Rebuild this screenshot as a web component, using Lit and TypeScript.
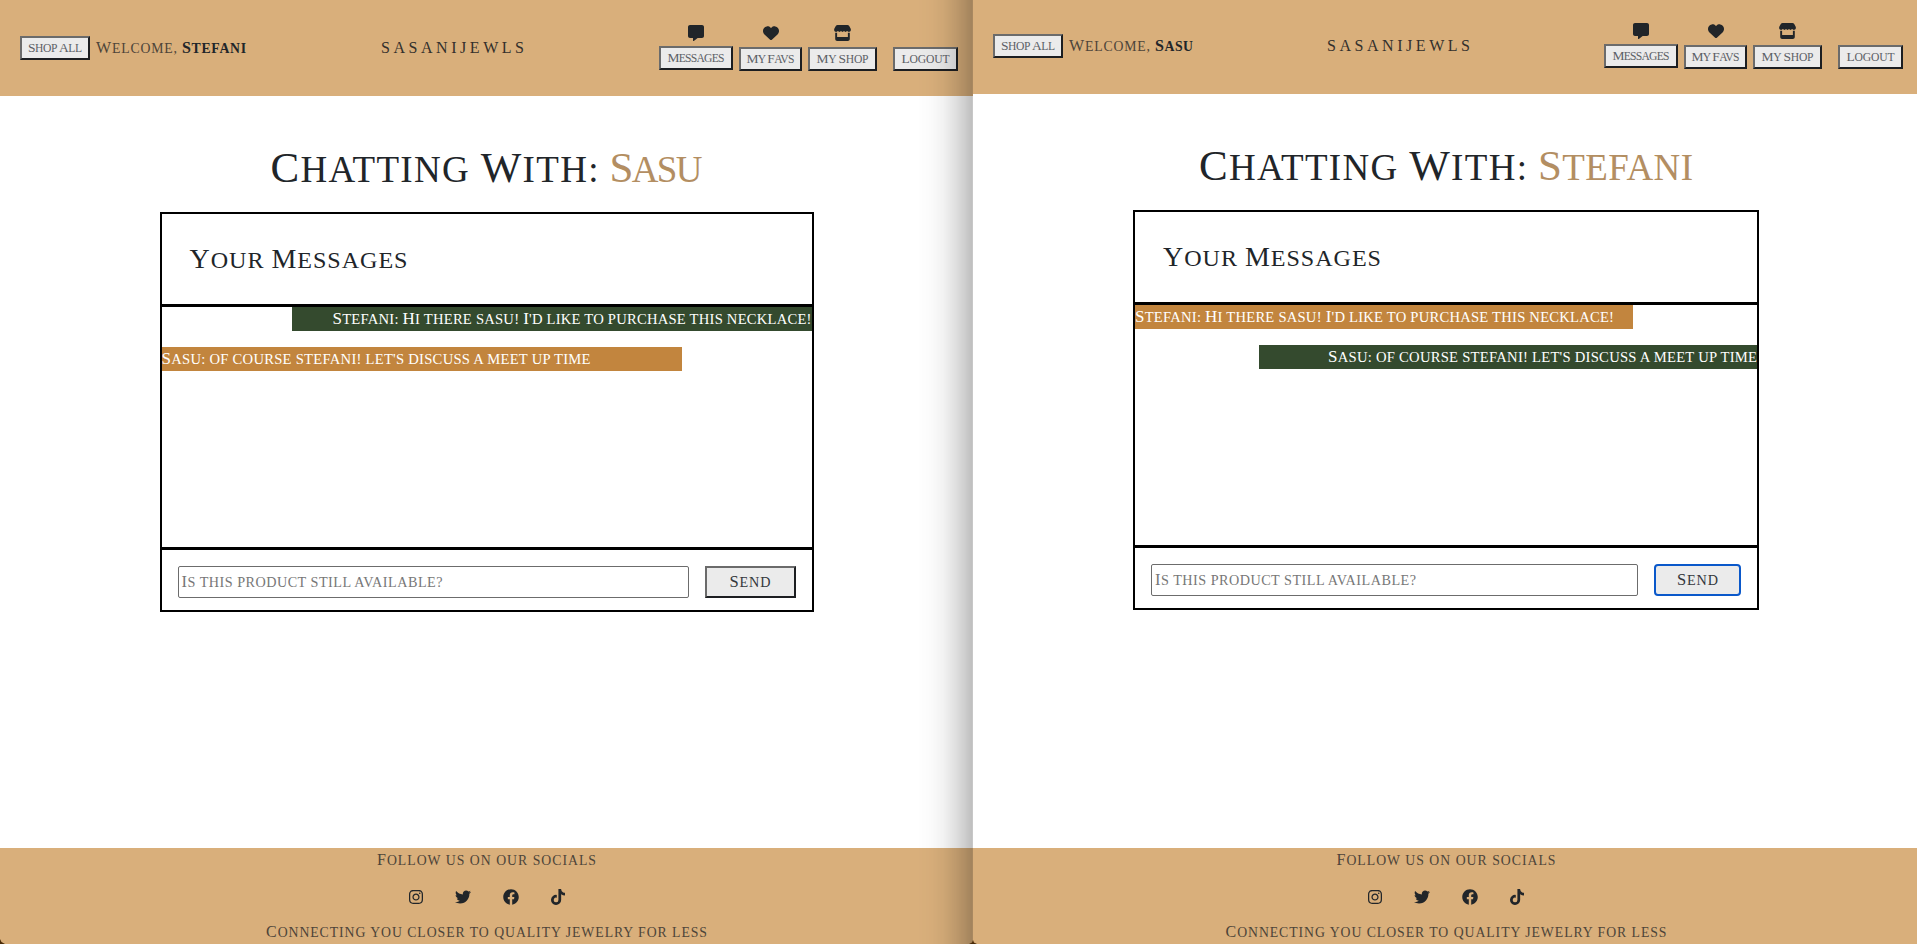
import { LitElement, html, css, svg } from "lit";
import { customElement, property } from "lit/decorators.js";

/* Small-caps run whose tracking is spread so that the line takes a set measure. */
@customElement("cap-text")
class CapText extends LitElement {
  @property() text = "";
  @property({ type: Number }) measure = 0;

  static styles = css`
    :host { display: inline-block; white-space: pre; text-align: left; }
    .run { display: inline-block; text-transform: uppercase; }
    .low { font-size: 0.86em; }
  `;

  updated() {
    const run = this.renderRoot.querySelector(".run") as HTMLElement;
    run.style.letterSpacing = "0px";
    const natural = run.getBoundingClientRect().width;
    run.style.letterSpacing = `${(this.measure - natural) / Math.max(1, this.text.length - 1)}px`;
    this.style.width = `${this.measure}px`;
  }

  render() {
    const parts = this.text.match(/[A-Z]+|[^A-Z]+/g) ?? [];
    return html`<span class="run">${parts.map((p) =>
      /[A-Z]/.test(p) ? p : html`<span class="low">${p}</span>`)}</span>`;
  }
}

const ICONS: Record<string, { box: string; w: number; body: unknown }> = {
  message: { box: "0 0 512 512", w: 16, body: svg`<path d="M64 0C28.7 0 0 28.7 0 64V352c0 35.3 28.7 64 64 64h96v80c0 6.1 3.4 11.6 8.8 14.3s11.9 2.1 16.8-1.5L309.3 416H448c35.3 0 64-28.7 64-64V64c0-35.3-28.7-64-64-64H64z"/>` },
  heart: { box: "0 0 512 512", w: 16, body: svg`<path d="M47.6 300.4L228.3 469.1c7.5 7 17.4 10.9 27.7 10.9s20.2-3.9 27.7-10.9L464.4 300.4c30.4-28.3 47.6-68 47.6-109.5v-5.8c0-69.9-50.5-129.5-119.4-141C347 36.5 300.6 51.4 268 84L256 96 244 84c-32.6-32.6-79-47.5-124.6-39.9C50.5 55.6 0 115.2 0 185.1v5.8c0 41.5 17.2 81.2 47.6 109.5z"/>` },
  shop: { box: "0 0 17 16", w: 17, body: svg`<path d="M3.600 0h9.800c.8 0 1.400.3 1.800 1L16.600 3.500c.4.8.4 1.600.1 2.300-.3.7-1 1.100-1.800 1.100-.8 0-1.400-.3-1.800-.8-.4.500-1 .8-1.600.8-.6 0-1.100-.3-1.500-.8-.4.500-.9.8-1.500.8s-1.100-.3-1.500-.8c-.4.500-.9.8-1.500.8-.6 0-1.200-.3-1.600-.8-.4.500-1 .8-1.800.8S.600 6.500.300 5.800C0 5.100 0 4.300.400 3.500L1.800 1C2.200.3 2.800 0 3.600 0zM1.200 7.700h1.900V12h10.800V7.700h1.900V14c0 1.100-.9 2-2 2H3.200c-1.100 0-2-.9-2-2z"/>` },
  instagram: { box: "0 0 448 512", w: 14, body: svg`<path d="M224.1 141c-63.6 0-114.9 51.3-114.9 114.9s51.300 114.900 114.900 114.900S339 319.500 339 255.900 287.700 141 224.100 141zm0 189.600c-41.100 0-74.700-33.500-74.700-74.700s33.500-74.700 74.700-74.700 74.700 33.500 74.700 74.700-33.600 74.700-74.700 74.700zm146.400-194.300c0 14.900-12 26.800-26.800 26.800-14.900 0-26.800-12-26.800-26.800s12-26.800 26.800-26.800 26.800 12 26.800 26.800zm76.100 27.200c-1.700-35.900-9.900-67.700-36.200-93.900-26.200-26.200-58-34.400-93.900-36.200-37-2.100-147.900-2.100-184.900 0-35.800 1.700-67.600 9.900-93.900 36.100s-34.400 58-36.200 93.900c-2.100 37-2.100 147.900 0 184.900 1.700 35.900 9.900 67.700 36.200 93.900s58 34.400 93.900 36.200c37 2.100 147.900 2.100 184.900 0 35.900-1.700 67.700-9.900 93.900-36.200 26.200-26.200 34.400-58 36.200-93.900 2.100-37 2.100-147.800 0-184.800zM398.800 388c-7.800 19.600-22.900 34.700-42.600 42.600-29.500 11.700-99.500 9-132.100 9s-102.700 2.600-132.100-9c-19.600-7.800-34.700-22.900-42.600-42.600-11.700-29.500-9-99.500-9-132.100s-2.600-102.700 9-132.100c7.800-19.600 22.900-34.700 42.600-42.600 29.500-11.700 99.500-9 132.100-9s102.700-2.600 132.100 9c19.600 7.800 34.700 22.900 42.600 42.600 11.700 29.500 9 99.500 9 132.100s2.700 102.700-9 132.100z"/>` },
  twitter: { box: "0 0 512 512", w: 16, body: svg`<path d="M459.37 151.716c.325 4.548.325 9.097.325 13.645 0 138.72-105.583 298.558-298.558 298.558-59.452 0-114.680-17.219-161.137-47.106 8.447.974 16.568 1.299 25.340 1.299 49.055 0 94.213-16.568 130.274-44.832-46.132-.975-84.792-31.188-98.112-72.772 6.498.974 12.995 1.624 19.818 1.624 9.421 0 18.843-1.300 27.614-3.573-48.081-9.747-84.143-51.980-84.143-102.985v-1.299c13.969 7.797 30.214 12.670 47.431 13.319-28.264-18.843-46.781-51.005-46.781-87.391 0-19.492 5.197-37.360 14.294-52.954 51.655 63.675 129.300 105.258 216.365 109.807-1.624-7.797-2.599-15.918-2.599-24.040 0-57.828 46.782-104.934 104.934-104.934 30.213 0 57.502 12.670 76.670 33.137 23.715-4.548 46.456-13.320 66.599-25.340-7.798 24.366-24.366 44.833-46.132 57.827 21.117-2.273 41.584-8.122 60.426-16.243-14.292 20.791-32.161 39.308-52.628 54.253z"/>` },
  facebook: { box: "0 0 512 512", w: 16, body: svg`<path d="M504 256C504 119 393 8 256 8S8 119 8 256c0 123.780 90.690 226.380 209.250 245V327.690h-63V256h63v-54.640c0-62.150 37-96.480 93.670-96.480 27.140 0 55.520 4.840 55.520 4.840v61h-31.280c-30.800 0-40.410 19.120-40.410 38.730V256h68.780l-11 71.690h-57.780V501C413.310 482.380 504 379.780 504 256z"/>` },
  tiktok: { box: "0 0 448 512", w: 14, body: svg`<path d="M448 209.910a210.060 210.060 0 0 1-122.770-39.250V349.380A162.550 162.550 0 1 1 185 188.310V278.200a74.620 74.620 0 1 0 52.230 71.180V0h88a121.180 121.180 0 0 0 1.860 22.170A122.180 122.180 0 0 0 381 102.390a121.430 121.430 0 0 0 67 20.140z"/>` },
};

const icon = (name: string) => {
  const i = ICONS[name];
  return html`<svg width=${i.w} height="16" viewBox=${i.box} fill="#212529">${i.body}</svg>`;
};

interface Message { text: string; own: boolean; measure: number }

@customElement("chat-pane")
class ChatPane extends LitElement {
  @property() user = "";
  @property() peer = "";
  @property({ type: Array }) m: number[] = [];
  @property({ type: Array }) messages: Message[] = [];
  @property({ type: Boolean, reflect: true }) front = false;

  static styles = css`
    :host {
      display: flex; flex-direction: column; box-sizing: border-box; height: 944px;
      background: #fff; color: #212529; overflow: hidden;
      font-family: "Liberation Serif", serif; --dy: 0px;
    }
    :host([front]) { --dy: 2px; }
    svg { display: block; }
    .header {
      display: flex; justify-content: space-between; height: calc(96px - var(--dy));
      flex: none; background: #d9af7b; padding: 0 15px 0 20px; box-sizing: border-box;
    }
    :host([front]) .header { padding-right: 14px; }
    .left { display: flex; padding-top: calc(36px - var(--dy)); height: 24px; }
    .btn {
      box-sizing: border-box; height: 24px; border: 2px solid; flex: none;
      border-color: #6b6b6b #1c1e21 #1c1e21 #6b6b6b; background: #ebebeb;
      display: flex; justify-content: center; font-size: 13.500px; line-height: 20px; color: #5c6066;
    }
    .welcome { font-size: 16px; line-height: 24px; margin-left: 6px; color: #4d4439; }
    .name { font-size: 16px; line-height: 24px; font-weight: bold; margin-left: 5px; }
    .brand { font-size: 16px; line-height: 24px; padding-top: calc(36px - var(--dy)); color: #33302c; }
    .nav { display: flex; gap: 6px; padding-top: calc(25px - var(--dy)); }
    .item { display: flex; flex-direction: column; align-items: center; gap: 6px; }
    .item.first { gap: 5px; }
    .item.out { padding-top: 22px; margin-left: 10px; }
    .main { flex: 1; display: flex; flex-direction: column; align-items: center; }
    :host([front]) .main, :host([front]) .footer { padding-left: 2px; }
    .title {
      height: 116px; display: flex; justify-content: center; gap: 11px;
      font-size: 43px; line-height: 48px; padding-top: 48px; box-sizing: border-box; margin: 0; font-weight: 400;
    }
    .peer { color: #b38e62; }
    .card { width: 654px; height: 400px; box-sizing: border-box; border: 2px solid #000; display: flex; flex-direction: column; }
    :host([front]) .card { width: 626px; }
    .cardhead { height: 90px; flex: none; padding: 29px 0 0 28px; box-sizing: border-box; font-size: 28px; line-height: 32px; }
    .list { height: 240px; flex: none; border-top: 3px solid #000; display: flex; flex-direction: column; gap: 16px; }
    .bubble { width: 80%; height: 24px; flex: none; background: #c2853e; color: #fff; font-size: 17px; line-height: 24px; white-space: nowrap; }
    .bubble.own { background: #344a2e; align-self: flex-end; text-align: right; }
    .form { border-top: 3px solid #000; display: flex; gap: 16px; padding: 16px 16px 12px; height: 32px; }
    .input {
      flex: 1; box-sizing: border-box; border: 1px solid #6c6c6c; border-radius: 2px;
      padding-left: 3px; font-size: 16.500px; line-height: 30px; color: #777;
    }
    .send {
      width: 91px; height: 32px; box-sizing: border-box; border: 2px solid;
      border-color: #6b6b6b #1c1e21 #1c1e21 #6b6b6b; background: #ebebeb;
      display: flex; justify-content: center; font-size: 16.500px; line-height: 28px; color: #33373b;
    }
    :host([front]) .send { width: 87px; border-color: #0a58ca; border-radius: 4px; }
    .footer {
      flex: none; height: 96px; background: #d9af7b; display: flex; flex-direction: column; align-items: center;
      font-size: 16px; line-height: 24px; color: #4d4439; box-sizing: border-box;
    }
    .socials { display: flex; gap: 32px; padding: 16px 0 15px; }
  `;

  render() {
    const m = this.m;
    const t = (text: string, i: number) => html`<cap-text .text=${text} .measure=${m[i]}></cap-text>`;
    const b = (text: string, i: number, w: number) =>
      html`<div class="btn" style="width:${w}px">${t(text, i)}</div>`;
    return html`
      <div class="header">
        <div class="left">
          ${b("Shop All", 0, 70)}
          <div class="welcome">${t("Welcome,", 1)}</div>
          <div class="name">${t(this.user, 2)}</div>
        </div>
        <div class="brand">${t("SASANIJEWLS", 3)}</div>
        <div class="nav">
          <div class="item first">${icon("message")}${b("Messages", 4, 74)}</div>
          <div class="item">${icon("heart")}${b("My Favs", 5, 63)}</div>
          <div class="item">${icon("shop")}${b("My Shop", 6, 69)}</div>
          <div class="item out">${b("Logout", 7, 65)}</div>
        </div>
      </div>
      <div class="main">
        <h1 class="title">${t("Chatting With:", 8)}<span class="peer">${t(this.peer, 9)}</span></h1>
        <div class="card">
          <div class="cardhead">${t("Your Messages", 10)}</div>
          <div class="list">
            ${this.messages.map((x) => html`<div class="bubble ${x.own ? "own" : ""}"><cap-text .text=${x.text} .measure=${x.measure}></cap-text></div>`)}
          </div>
          <div class="form">
            <div class="input">${t("Is this product still available?", 11)}</div>
            <div class="send">${t("Send", 12)}</div>
          </div>
        </div>
      </div>
      <div class="footer">
        ${t("Follow us on our socials", 13)}
        <div class="socials">${["instagram", "twitter", "facebook", "tiktok"].map(icon)}</div>
        ${t("Connecting you closer to quality jewelry for less", 14)}
      </div>`;
  }
}

const HELLO = "Stefani: Hi there sasu! I'd like to purchase this necklace!";
const REPLY = "Sasu: of course stefani! let's discuss a meet up time";

@customElement("app-root")
class AppRoot extends LitElement {
  static styles = css`
    :host { display: block; width: 1917px; height: 944px; overflow: hidden; }
    .desk { display: grid; grid-template-columns: 973px 944px; position: relative; }
    .shade {
      position: absolute; left: 917px; top: 0; width: 56px; height: 944px; box-sizing: border-box;
      border-right: 1px solid rgba(0, 0, 0, 0.22);
      background: linear-gradient(to right, rgba(0,0,0,0) 0%, rgba(0,0,0,.015) 25%, rgba(0,0,0,.05) 48%, rgba(0,0,0,.12) 70%, rgba(0,0,0,.19) 86%, rgba(0,0,0,.25) 100%);
    }
    .notch { position: absolute; background: #4a2b08; }
    .mid { left: 969px; top: 940px; width: 8px; height: 4px; clip-path: polygon(50% 0, 62% 60%, 100% 100%, 0 100%, 38% 60%); }
    .edge { left: 0; top: 939px; width: 5px; height: 5px; clip-path: polygon(0 0, 30% 60%, 100% 100%, 0 100%); }
  `;

  render() {
    return html`<div class="desk">
      <chat-pane user="Stefani" peer="Sasu"
        .m=${[54, 81, 64, 143, 57, 48, 52, 48, 328, 93, 218, 261, 41, 219, 441]}
        .messages=${[{ text: HELLO, own: true, measure: 479 }, { text: REPLY, own: false, measure: 429 }]}></chat-pane>
      <chat-pane front user="Sasu" peer="Stefani"
        .m=${[54, 81, 38, 143, 57, 48, 52, 48, 328, 155, 218, 261, 41, 219, 441]}
        .messages=${[{ text: HELLO, own: false, measure: 479 }, { text: REPLY, own: true, measure: 429 }]}></chat-pane>
      <div class="shade"></div>
      <div class="notch mid"></div>
      <div class="notch edge"></div>
    </div>`;
  }
}
